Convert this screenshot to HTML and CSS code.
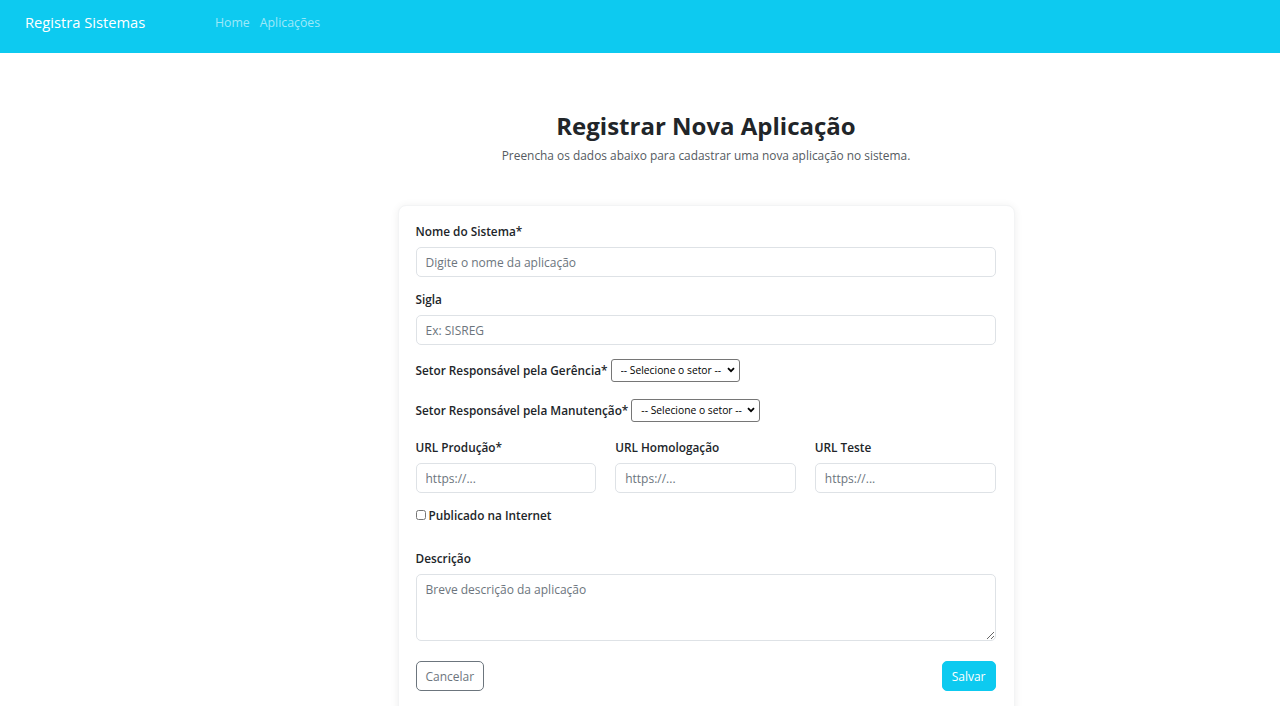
FILE: index.html
```html
<!DOCTYPE html>
<html lang="pt-BR">
<head>
<meta charset="utf-8">
<title>Registra Sistemas</title>
<link rel="stylesheet" href="styles.css">
</head>
<body>
<nav class="navbar">
  <span class="brand">Registra Sistemas</span>
  <div class="nav-links">
    <a href="#" class="nav-link">Home</a>
    <a href="#" class="nav-link">Aplicações</a>
  </div>
</nav>
<main class="main">
  <h1 class="title">Registrar Nova Aplicação</h1>
  <p class="subtitle">Preencha os dados abaixo para cadastrar uma nova aplicação no sistema.</p>
  <form class="card">
    <div class="group">
      <label class="label">Nome do Sistema*</label>
      <input class="input" type="text" placeholder="Digite o nome da aplicação">
    </div>
    <div class="group">
      <label class="label">Sigla</label>
      <input class="input" type="text" placeholder="Ex: SISREG">
    </div>
    <div class="inline-row">
      <label class="label">Setor Responsável pela Gerência*</label>
      <select class="select"><option>-- Selecione o setor --</option></select>
    </div>
    <div class="inline-row">
      <label class="label">Setor Responsável pela Manutenção*</label>
      <select class="select"><option>-- Selecione o setor --</option></select>
    </div>
    <div class="url-grid">
      <div class="col">
        <label class="label">URL Produção*</label>
        <input class="input" type="text" placeholder="https://...">
      </div>
      <div class="col">
        <label class="label">URL Homologação</label>
        <input class="input" type="text" placeholder="https://...">
      </div>
      <div class="col">
        <label class="label">URL Teste</label>
        <input class="input" type="text" placeholder="https://...">
      </div>
    </div>
    <div class="check-row">
      <input type="checkbox" class="checkbox" id="pub">
      <label class="label" for="pub">Publicado na Internet</label>
    </div>
    <div class="group desc">
      <label class="label">Descrição</label>
      <textarea class="input textarea" placeholder="Breve descrição da aplicação"></textarea>
    </div>
    <div class="actions">
      <button type="button" class="btn btn-outline">Cancelar</button>
      <button type="button" class="btn btn-info">Salvar</button>
    </div>
  </form>
</main>
</body>
</html>
```
FILE: styles.css
```css
* { box-sizing: border-box; }
body {
  margin: 0;
  font-family: "Open Sans", "Noto Sans", sans-serif;
  color: #212529;
  background: #fff;
}
.navbar {
  height: 53px;
  background: #0dcaf0;
  display: flex;
  align-items: center;
  padding: 0 25px 9px;
}
.brand {
  color: #fff;
  font-size: 14.7px;
  width: 190px;
}
.nav-links { display: flex; gap: 10px; }
.nav-link {
  color: rgba(255,255,255,0.6);
  text-decoration: none;
  font-size: 12.3px;
}
.main {
  display: flex;
  flex-direction: column;
  align-items: center;
  padding-left: 132px;
  padding-top: 57px;
}
.title {
  margin: 0;
  font-size: 24px;
  font-weight: 700;
  line-height: 31px;
}
.subtitle {
  margin: 4px 0 0;
  font-size: 11.9px;
  line-height: 20px;
  color: #555b61;
}
.card {
  margin-top: 40px;
  width: 617px;
  padding: 16px 18px 30px 17px;
  border-radius: 8px;
  background: #fff;
  box-shadow: 0 1px 8px rgba(0,0,0,0.07);
  border: 1px solid #f3f4f5;
}
.group {
  display: flex;
  flex-direction: column;
  gap: 6px;
  margin-bottom: 13px;
}
.label {
  font-size: 11.8px;
  font-weight: 600;
  line-height: 19px;
  color: #212529;
}
.input {
  height: 30px;
  width: 100%;
  border: 1px solid #dee2e6;
  border-radius: 5px;
  padding: 0 9px;
  font-family: inherit;
  font-size: 12px;
  color: #212529;
}
.input::placeholder { color: #6c757d; }
.inline-row {
  display: flex;
  align-items: center;
  gap: 3px;
  height: 24px;
  margin-bottom: 16px;
}
.select {
  appearance: none;
  -webkit-appearance: none;
  height: 23px;
  border: 1px solid #767676;
  border-radius: 3px;
  background: #fff url("data:image/svg+xml;utf8,<svg xmlns='http://www.w3.org/2000/svg' width='8' height='6' viewBox='0 0 8 6'><path d='M1 1.2 L4 4.2 L7 1.2' fill='none' stroke='black' stroke-width='1.8'/></svg>") no-repeat right 4px center;
  font-family: inherit;
  font-size: 10.3px;
  color: #000;
  padding: 0 17px 0 9px;
}
.url-grid {
  display: grid;
  grid-template-columns: repeat(3, 1fr);
  column-gap: 19px;
  margin-bottom: 12px;
}
.col {
  display: flex;
  flex-direction: column;
  gap: 6px;
}
.check-row {
  display: flex;
  align-items: center;
  gap: 3px;
  height: 20px;
}
.checkbox {
  margin: 0;
  width: 10px;
  height: 10px;
}
.desc { margin-top: 24px; margin-bottom: 20px; }
.textarea {
  height: 67px;
  padding-top: 6px;
  resize: vertical;
}
.actions {
  display: flex;
  justify-content: space-between;
}
.btn {
  height: 30px;
  border-radius: 5px;
  font-family: inherit;
  font-size: 12px;
  padding: 0 9px;
  cursor: pointer;
}
.btn-outline {
  background: #fff;
  border: 1px solid #6c757d;
  color: #6c757d;
}
.btn-info {
  background: #0dcaf0;
  border: 1px solid #0dcaf0;
  color: #fff;
  padding: 0 9px;
}
```
